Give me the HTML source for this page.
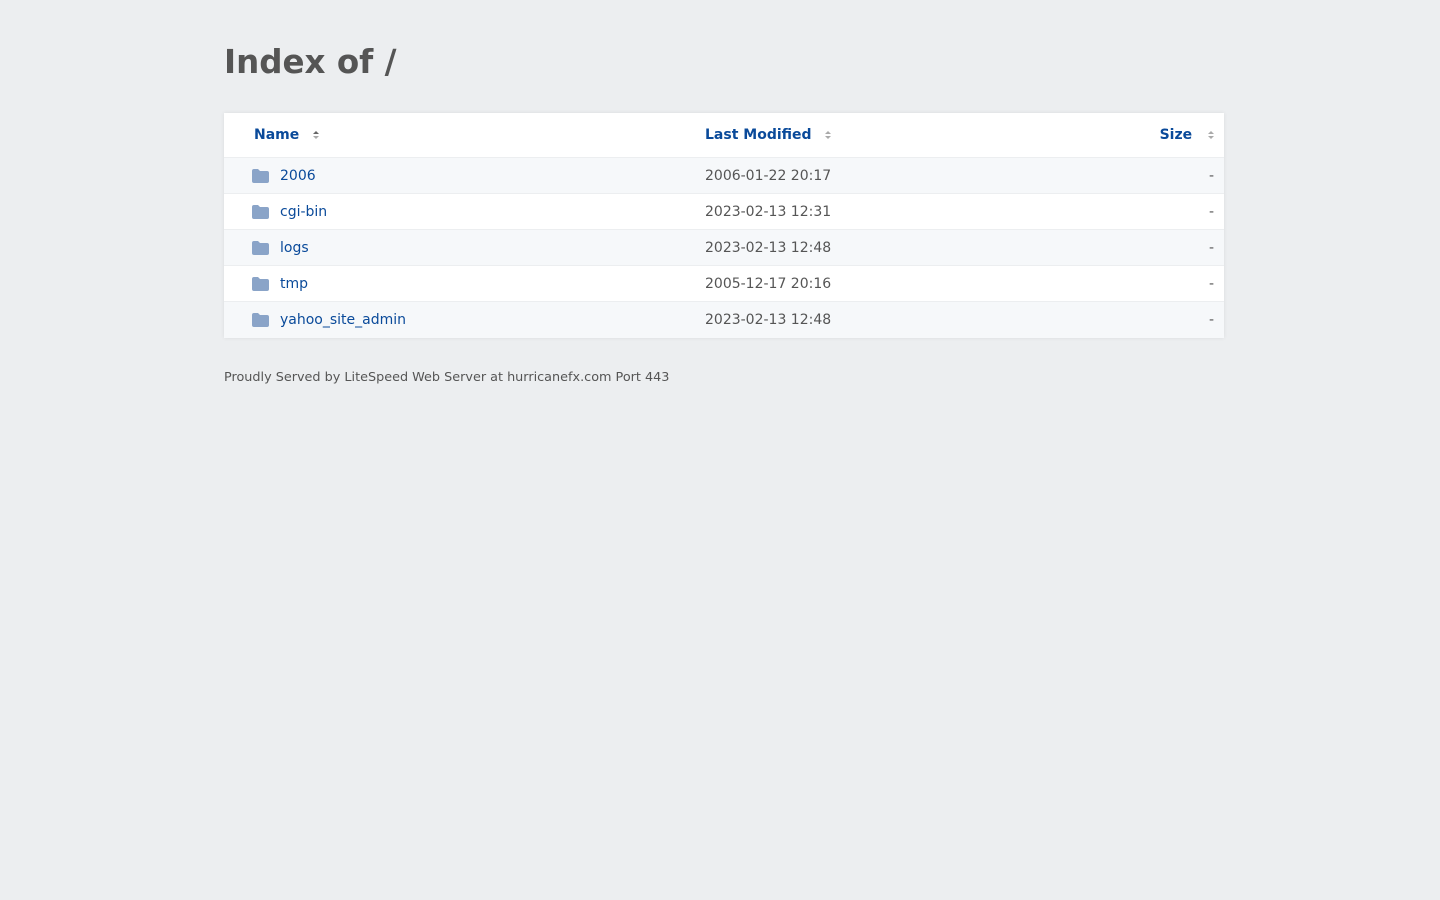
<!DOCTYPE html>
<html><head><style>
body{margin:0;background:#eceef0;font-family:"DejaVu Sans",sans-serif;color:#555;}
.wrap{position:absolute;left:224px;width:1000px;top:0}
h1{margin:0;position:absolute;top:43px;font-size:32.5px;font-weight:bold;color:#555;white-space:nowrap}
.tbl{position:absolute;top:113px;width:1000px;background:#fff;box-shadow:0 0 4px rgba(0,0,0,.08)}
.hd{height:44px;position:relative;border-bottom:1px solid #eceef0;font-size:14px;font-weight:bold;color:#0a4a9a}
.hd span{position:absolute;top:14px}
.row{height:35px;position:relative;border-bottom:1px solid #eceef0;font-size:14px}
.row:last-child{border-bottom:0;height:36px}
.row:nth-child(odd){background:#f6f8fa}
.row .n{position:absolute;left:56px;top:10px;color:#0a4a9a}
.row .d{position:absolute;left:481px;top:10px;color:#555}
.row .s{position:absolute;right:10px;top:10px;color:#555}
.row svg{position:absolute;left:28px;top:11px}
.ar{display:inline-block;vertical-align:middle;margin-left:8px}
.foot{position:absolute;top:370px;font-size:12.8px;color:#555;white-space:nowrap}
</style></head><body>
<div class="wrap">
<h1>Index of /</h1>
<div class="tbl">
<div class="hd">
<span style="left:30px">Name <svg class="ar" width="8" height="10" viewBox="0 0 8 10"><path d="M1 4L4 1L7 4Z" fill="#666"/><path d="M1 6L4 9L7 6Z" fill="#aaa"/></svg></span>
<span style="left:481px">Last Modified <svg class="ar" width="8" height="10" viewBox="0 0 8 10"><path d="M1 4L4 1L7 4Z" fill="#aaa"/><path d="M1 6L4 9L7 6Z" fill="#aaa"/></svg></span>
<span style="right:9px">Size <svg class="ar" style="margin-left:10px" width="8" height="10" viewBox="0 0 8 10"><path d="M1 4L4 1L7 4Z" fill="#aaa"/><path d="M1 6L4 9L7 6Z" fill="#aaa"/></svg></span>
</div>
<div>
<div class="row"><svg width="17" height="14" viewBox="0 0 17 14"><path d="M0 2Q0 0 2 0H6L8 2H15Q17 2 17 4V12Q17 14 15 14H2Q0 14 0 12Z" fill="#8aa4c8"/></svg><span class="n">2006</span><span class="d">2006-01-22 20:17</span><span class="s">-</span></div>
<div class="row"><svg width="17" height="14" viewBox="0 0 17 14"><path d="M0 2Q0 0 2 0H6L8 2H15Q17 2 17 4V12Q17 14 15 14H2Q0 14 0 12Z" fill="#8aa4c8"/></svg><span class="n">cgi-bin</span><span class="d">2023-02-13 12:31</span><span class="s">-</span></div>
<div class="row"><svg width="17" height="14" viewBox="0 0 17 14"><path d="M0 2Q0 0 2 0H6L8 2H15Q17 2 17 4V12Q17 14 15 14H2Q0 14 0 12Z" fill="#8aa4c8"/></svg><span class="n">logs</span><span class="d">2023-02-13 12:48</span><span class="s">-</span></div>
<div class="row"><svg width="17" height="14" viewBox="0 0 17 14"><path d="M0 2Q0 0 2 0H6L8 2H15Q17 2 17 4V12Q17 14 15 14H2Q0 14 0 12Z" fill="#8aa4c8"/></svg><span class="n">tmp</span><span class="d">2005-12-17 20:16</span><span class="s">-</span></div>
<div class="row"><svg width="17" height="14" viewBox="0 0 17 14"><path d="M0 2Q0 0 2 0H6L8 2H15Q17 2 17 4V12Q17 14 15 14H2Q0 14 0 12Z" fill="#8aa4c8"/></svg><span class="n">yahoo_site_admin</span><span class="d">2023-02-13 12:48</span><span class="s">-</span></div>
</div>
</div>
<div class="foot">Proudly Served by LiteSpeed Web Server at hurricanefx.com Port 443</div>
</div>
</body></html>
